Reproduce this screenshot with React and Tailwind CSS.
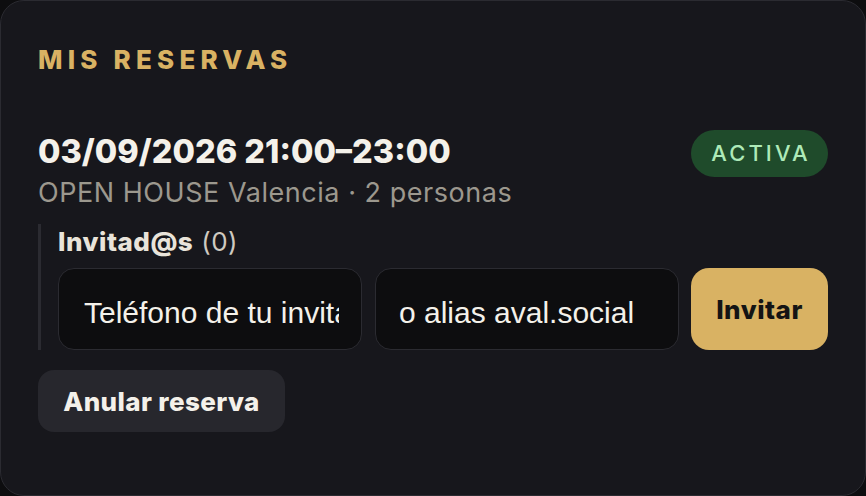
import { useState } from 'react';

export default function App() {
  const [phone, setPhone] = useState('');
  const [alias, setAlias] = useState('');

  return (
    <div className="min-h-screen bg-[#0d0d0f]" style={{ fontFamily: 'Inter, "Noto Sans", sans-serif' }}>
      <div className="h-[496px] rounded-[24px] border border-[#2b2b31] bg-[#17171c] px-[37px] pt-[44px]">
        <h2 className="text-[26px] font-extrabold leading-[30px] tracking-[0.2em] text-[#d9b263]">MIS RESERVAS</h2>

        <div className="mt-[57px] flex items-start justify-between">
          <div>
            <div className="text-[32.5px] font-extrabold leading-[40px] text-[#f4f1ea]">
              03/09/2026 21:00–23:00
            </div>
            <div className="mt-[4px] text-[27px] leading-[34px] tracking-[0.02em] text-[#9c988e]">
              OPEN HOUSE Valencia · 2 personas
            </div>
          </div>
          <span className="mt-[-2px] flex h-[47px] w-[137px] items-center justify-center rounded-full bg-[#1f4b2b] pl-[3px] text-[22px] font-medium tracking-[0.14em] text-[#aeeab8]">
            ACTIVA
          </span>
        </div>

        <div className="mt-[14px] border-l-[3px] border-[#2b2b31] pl-[17px]">
          <div className="text-[26px] leading-[36px] tracking-[0.02em] text-[#e9e4da]">
            <span className="font-extrabold">Invitad@s</span> <span className="font-normal text-[#cfcac0]">(0)</span>
          </div>
          <div className="mt-[8px] flex gap-[13px]">
            <input
              value={phone}
              onChange={(e) => setPhone(e.target.value)}
              placeholder="Teléfono de tu invitado"
              className="h-[82px] w-[304px] min-w-0 rounded-[16px] border border-[#2b2b31] bg-[#0d0d0f] pl-[25px] pr-[22px] pt-[8px] text-[30px] text-[#f4f1ea] outline-none placeholder:text-[#f4f1ea]"
              style={{ fontFamily: '"Liberation Sans", Arial, sans-serif' }}
            />
            <input
              value={alias}
              onChange={(e) => setAlias(e.target.value)}
              placeholder="o alias aval.social"
              className="h-[82px] w-[304px] min-w-0 rounded-[16px] border border-[#2b2b31] bg-[#0d0d0f] pl-[23px] pr-[22px] pt-[8px] text-[30px] text-[#f4f1ea] outline-none placeholder:text-[#f4f1ea]"
              style={{ fontFamily: '"Liberation Sans", Arial, sans-serif' }}
            />
            <button className="ml-[-1px] h-[82px] w-[137px] rounded-[18px] bg-[#d9b263] text-[26px] font-extrabold tracking-[0.02em] text-[#141414]">
              Invitar
            </button>
          </div>
        </div>

        <button className="mt-[20px] h-[62px] w-[247px] rounded-[16px] bg-[#27272d] text-[26px] font-extrabold tracking-[0.015em] text-[#f4f1ea]">
          Anular reserva
        </button>
      </div>
    </div>
  );
}
